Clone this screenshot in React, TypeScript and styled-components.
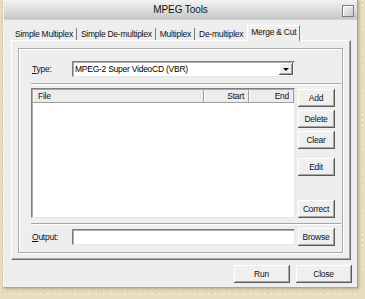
import styled, { createGlobalStyle } from 'styled-components';

const GlobalStyle = createGlobalStyle`
  html, body {
    margin: 0;
    padding: 0;
  }
  body {
    width: 365px;
    height: 299px;
    overflow: hidden;
    font-family: "Liberation Sans", Arial, sans-serif;
    font-size: 8.5px;
    letter-spacing: -0.25px;
    color: #111;
  }
`;

const Backdrop = styled.div`
  width: 365px;
  height: 299px;
  box-sizing: border-box;
  padding: 0 7px 11px 3px;
  background-color: #e8ddbf;
  background-image:
    radial-gradient(rgba(190, 168, 110, 0.4) 0.8px, transparent 1px),
    radial-gradient(rgba(255, 251, 236, 0.6) 0.8px, transparent 1px);
  background-size: 5px 5px, 7px 6px;
  background-position: 0 0, 2px 3px;
`;

const Window = styled.div`
  width: 355px;
  height: 288px;
  box-sizing: border-box;
  display: flex;
  flex-direction: column;
  background: #eeeeee;
  border-left: 1px solid #f6f6f6;
  border-right: 1px solid #a4a4a4;
  border-bottom: 1px solid #a4a4a4;
  box-shadow: 1px 1px 3px rgba(80, 60, 20, 0.35);
`;

const TitleBar = styled.div`
  height: 20px;
  flex: none;
  display: grid;
  grid-template-columns: 1fr auto 1fr;
  align-items: center;
  background: linear-gradient(#f3f3f3, #dcdcdc 55%, #c6c6c6);
  border-bottom: 1px solid #d0d0d0;
  box-sizing: border-box;
`;

const Title = styled.span`
  grid-column: 2;
  font-size: 10px;
  letter-spacing: -0.1px;
  color: #111;
`;

const CloseBox = styled.span`
  grid-column: 3;
  justify-self: end;
  margin-right: 3px;
  margin-top: 2px;
  width: 10px;
  height: 10px;
  border: 1px solid #7a7a7a;
  background: linear-gradient(135deg, #f6f6f6, #c8c8c8);
  box-shadow: inset 1px 1px #ffffff;
`;

const TabStrip = styled.div`
  height: 18px;
  margin-top: 2px;
  flex: none;
  display: flex;
  align-items: flex-end;
  padding-left: 7px;
  position: relative;
  z-index: 1;
`;

const Tab = styled.div<{ $active?: boolean; $sep?: boolean }>`
  height: ${(p) => (p.$active ? '16px' : '12px')};
  line-height: ${(p) => (p.$active ? '13px' : '12px')};
  padding: 0 3px 0 ${(p) => (p.$active ? '3px' : '4px')};
  white-space: nowrap;
  box-sizing: border-box;
  background: #eeeeee;
  border-right: ${(p) => (p.$sep || p.$active ? '1px solid #7c7c7c' : '1px solid transparent')};
  border-left: ${(p) => (p.$active ? '1px solid #ffffff' : 'none')};
  border-top: ${(p) => (p.$active ? '1px solid #ffffff' : 'none')};
  margin-bottom: ${(p) => (p.$active ? '-1px' : '0')};
`;

const Panel = styled.div`
  margin: 0 6px 0 7px;
  height: 220px;
  box-sizing: border-box;
  border-top: 1px solid #ffffff;
  border-left: 1px solid #ffffff;
  border-right: 1px solid #6e6e6e;
  border-bottom: 1px solid #6e6e6e;
  box-shadow: inset -1px -1px #a8a8a8;
  padding: 7px 7px 6px 6px;
  display: flex;
`;

const Group = styled.div`
  flex: 1;
  border: 1px solid #a9a9a9;
  box-shadow: inset 1px 1px #ffffff, 1px 1px #ffffff;
  padding: 12px 1px 5px 12px;
  display: flex;
  flex-direction: column;
`;

const FieldRow = styled.div<{ $h?: number }>`
  display: grid;
  grid-template-columns: 38px 223px 37px;
  column-gap: 3px;
  align-items: center;
  height: ${(p) => p.$h ?? 16}px;
`;

const Label = styled.span`
  padding-left: 1px;
  u {
    text-decoration: underline;
    text-underline-offset: 1px;
  }
`;

const Sunken = styled.div`
  height: 16px;
  box-sizing: border-box;
  background: #ffffff;
  border-top: 1px solid #7e7e7e;
  border-left: 1px solid #7e7e7e;
  border-right: 1px solid #e6e6e6;
  border-bottom: 1px solid #e6e6e6;
  box-shadow: inset 1px 1px #a8a8a8;
  display: flex;
  align-items: center;
`;

const ComboText = styled.span`
  flex: 1;
  padding-left: 2px;
  color: #000;
`;

const DropButton = styled.span`
  width: 14px;
  height: 12px;
  margin-right: 1px;
  box-sizing: border-box;
  background: #eeeeee;
  border-right: 1px solid #555;
  border-bottom: 1px solid #555;
  box-shadow: inset 1px 1px #ffffff, inset -1px -1px #a6a6a6;
  display: flex;
  align-items: center;
  justify-content: center;
`;

const Arrow = styled.span`
  width: 0;
  height: 0;
  border-left: 3px solid transparent;
  border-right: 3px solid transparent;
  border-top: 3px solid #000;
  margin-top: 1px;
`;

const Separator = styled.div<{ $top: number; $bottom: number }>`
  height: 1px;
  flex: none;
  background: #a6a6a6;
  border-bottom: 1px solid #ffffff;
  margin: ${(p) => p.$top}px 0 ${(p) => p.$bottom}px;
`;

const ListArea = styled.div`
  display: flex;
  gap: 3px;
  height: 130px;
`;

const List = styled.div`
  width: 264px;
  box-sizing: border-box;
  background: #ffffff;
  border-top: 1px solid #7e7e7e;
  border-left: 1px solid #7e7e7e;
  border-right: 1px solid #e6e6e6;
  border-bottom: 1px solid #e6e6e6;
  box-shadow: inset 1px 1px #a8a8a8;
  padding: 1px 0 0 1px;
`;

const Header = styled.div`
  display: grid;
  grid-template-columns: 1fr 45px 45px;
  height: 13px;
  background: #ececec;
`;

const HeaderCell = styled.div<{ $right?: boolean }>`
  line-height: 12px;
  padding: 0 4px 0 5px;
  text-align: ${(p) => (p.$right ? 'right' : 'left')};
  border-right: 1px solid #a0a0a0;
  border-bottom: 1px solid #a0a0a0;
  box-shadow: inset 1px 0 #ffffff;
`;

const ButtonColumn = styled.div`
  width: 37px;
  display: flex;
  flex-direction: column;
  padding-top: 1px;
`;

const Button = styled.button<{ $w?: number; $gap?: number }>`
  width: ${(p) => p.$w ?? 37}px;
  height: 18px;
  flex: none;
  margin-top: ${(p) => p.$gap ?? 0}px;
  padding: 0;
  font: inherit;
  letter-spacing: inherit;
  color: #111;
  background: #efefef;
  border: none;
  border-right: 1px solid #5c5c5c;
  border-bottom: 1px solid #5c5c5c;
  box-shadow: inset 1px 1px #ffffff, inset -1px -1px #a6a6a6;
  box-sizing: border-box;
`;

const Spacer = styled.div`
  flex: 1;
`;

const Footer = styled.div`
  display: flex;
  justify-content: flex-end;
  gap: 6px;
  padding: 5px 5px 0 0;
`;

export default function App() {
  return (
    <>
      <GlobalStyle />
      <Backdrop>
        <Window>
          <TitleBar>
            <Title>MPEG Tools</Title>
            <CloseBox />
          </TitleBar>
          <TabStrip>
            <Tab $sep>Simple Multiplex</Tab>
            <Tab $sep>Simple De-multiplex</Tab>
            <Tab $sep>Multiplex</Tab>
            <Tab>De-multiplex</Tab>
            <Tab $active>Merge &amp; Cut</Tab>
          </TabStrip>
          <Panel>
            <Group>
              <FieldRow>
                <Label>
                  <u>T</u>ype:
                </Label>
                <Sunken>
                  <ComboText>MPEG-2 Super VideoCD (VBR)</ComboText>
                  <DropButton>
                    <Arrow />
                  </DropButton>
                </Sunken>
              </FieldRow>
              <Separator $top={6} $bottom={3} />
              <ListArea>
                <List>
                  <Header>
                    <HeaderCell>File</HeaderCell>
                    <HeaderCell $right>Start</HeaderCell>
                    <HeaderCell $right>End</HeaderCell>
                  </Header>
                </List>
                <ButtonColumn>
                  <Button>Add</Button>
                  <Button $gap={3}>Delete</Button>
                  <Button $gap={3}>Clear</Button>
                  <Button $gap={9}>Edit</Button>
                  <Spacer />
                  <Button>Correct</Button>
                </ButtonColumn>
              </ListArea>
              <Separator $top={5} $bottom={3} />
              <FieldRow $h={18}>
                <Label>
                  <u>O</u>utput:
                </Label>
                <Sunken>&nbsp;</Sunken>
                <Button>Browse</Button>
              </FieldRow>
            </Group>
          </Panel>
          <Footer>
            <Button $w={56}>Run</Button>
            <Button $w={56}>Close</Button>
          </Footer>
        </Window>
      </Backdrop>
    </>
  );
}
